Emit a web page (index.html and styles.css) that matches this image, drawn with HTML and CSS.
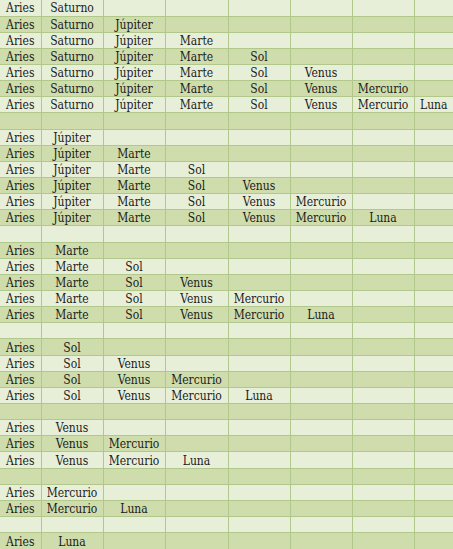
FILE: index.html
```html
<!DOCTYPE html>
<html lang="es">
<head>
<meta charset="utf-8">
<title>Combinaciones</title>
<link rel="stylesheet" href="styles.css">
</head>
<body>
<table class="grid">
<colgroup>
<col class="c-narrow"><col class="c1"><col class="c2"><col class="c3"><col class="c4"><col class="c5"><col class="c6"><col class="c-last">
</colgroup>
<tbody>
<tr><td>Aries</td><td>Saturno</td><td></td><td></td><td></td><td></td><td></td><td></td></tr>
<tr><td>Aries</td><td>Saturno</td><td>Júpiter</td><td></td><td></td><td></td><td></td><td></td></tr>
<tr><td>Aries</td><td>Saturno</td><td>Júpiter</td><td>Marte</td><td></td><td></td><td></td><td></td></tr>
<tr><td>Aries</td><td>Saturno</td><td>Júpiter</td><td>Marte</td><td>Sol</td><td></td><td></td><td></td></tr>
<tr><td>Aries</td><td>Saturno</td><td>Júpiter</td><td>Marte</td><td>Sol</td><td>Venus</td><td></td><td></td></tr>
<tr><td>Aries</td><td>Saturno</td><td>Júpiter</td><td>Marte</td><td>Sol</td><td>Venus</td><td>Mercurio</td><td></td></tr>
<tr><td>Aries</td><td>Saturno</td><td>Júpiter</td><td>Marte</td><td>Sol</td><td>Venus</td><td>Mercurio</td><td>Luna</td></tr>
<tr><td></td><td></td><td></td><td></td><td></td><td></td><td></td><td></td></tr>
<tr><td>Aries</td><td>Júpiter</td><td></td><td></td><td></td><td></td><td></td><td></td></tr>
<tr><td>Aries</td><td>Júpiter</td><td>Marte</td><td></td><td></td><td></td><td></td><td></td></tr>
<tr><td>Aries</td><td>Júpiter</td><td>Marte</td><td>Sol</td><td></td><td></td><td></td><td></td></tr>
<tr><td>Aries</td><td>Júpiter</td><td>Marte</td><td>Sol</td><td>Venus</td><td></td><td></td><td></td></tr>
<tr><td>Aries</td><td>Júpiter</td><td>Marte</td><td>Sol</td><td>Venus</td><td>Mercurio</td><td></td><td></td></tr>
<tr><td>Aries</td><td>Júpiter</td><td>Marte</td><td>Sol</td><td>Venus</td><td>Mercurio</td><td>Luna</td><td></td></tr>
<tr><td></td><td></td><td></td><td></td><td></td><td></td><td></td><td></td></tr>
<tr><td>Aries</td><td>Marte</td><td></td><td></td><td></td><td></td><td></td><td></td></tr>
<tr><td>Aries</td><td>Marte</td><td>Sol</td><td></td><td></td><td></td><td></td><td></td></tr>
<tr><td>Aries</td><td>Marte</td><td>Sol</td><td>Venus</td><td></td><td></td><td></td><td></td></tr>
<tr><td>Aries</td><td>Marte</td><td>Sol</td><td>Venus</td><td>Mercurio</td><td></td><td></td><td></td></tr>
<tr><td>Aries</td><td>Marte</td><td>Sol</td><td>Venus</td><td>Mercurio</td><td>Luna</td><td></td><td></td></tr>
<tr><td></td><td></td><td></td><td></td><td></td><td></td><td></td><td></td></tr>
<tr><td>Aries</td><td>Sol</td><td></td><td></td><td></td><td></td><td></td><td></td></tr>
<tr><td>Aries</td><td>Sol</td><td>Venus</td><td></td><td></td><td></td><td></td><td></td></tr>
<tr><td>Aries</td><td>Sol</td><td>Venus</td><td>Mercurio</td><td></td><td></td><td></td><td></td></tr>
<tr><td>Aries</td><td>Sol</td><td>Venus</td><td>Mercurio</td><td>Luna</td><td></td><td></td><td></td></tr>
<tr><td></td><td></td><td></td><td></td><td></td><td></td><td></td><td></td></tr>
<tr><td>Aries</td><td>Venus</td><td></td><td></td><td></td><td></td><td></td><td></td></tr>
<tr><td>Aries</td><td>Venus</td><td>Mercurio</td><td></td><td></td><td></td><td></td><td></td></tr>
<tr><td>Aries</td><td>Venus</td><td>Mercurio</td><td>Luna</td><td></td><td></td><td></td><td></td></tr>
<tr><td></td><td></td><td></td><td></td><td></td><td></td><td></td><td></td></tr>
<tr><td>Aries</td><td>Mercurio</td><td></td><td></td><td></td><td></td><td></td><td></td></tr>
<tr><td>Aries</td><td>Mercurio</td><td>Luna</td><td></td><td></td><td></td><td></td><td></td></tr>
<tr><td></td><td></td><td></td><td></td><td></td><td></td><td></td><td></td></tr>
<tr><td>Aries</td><td>Luna</td><td></td><td></td><td></td><td></td><td></td><td></td></tr>
</tbody>
</table>
</body>
</html>
```
FILE: styles.css
```css
html, body {
  margin: 0;
  padding: 0;
  background: #e8efd9;
}
.grid {
  width: 453px;
  height: 549px;
  border-collapse: collapse;
  table-layout: fixed;
}
.c-narrow { width: 41px; }
.c1 { width: 62px; }
.c2 { width: 62px; }
.c3 { width: 63px; }
.c4 { width: 62px; }
.c5 { width: 62px; }
.c6 { width: 62px; }
.c-last { width: 39px; }
.grid tr { height: 16.15px; }
.grid td {
  padding: 2px 0 0;
  height: 13px;
  line-height: 13px;
  text-align: center;
  white-space: nowrap;
  overflow: hidden;
  border: 1px solid #b2c78b;
  font-family: "DejaVu Serif Condensed", "DejaVu Serif", serif;
  font-stretch: condensed;
  font-size: 12px;
  color: #1b1b1b;
}
.grid tr:nth-child(odd) td { background: #e8efd9; }
.grid tr:nth-child(even) td { background: #cfddad; }
.grid tr:first-child td { border-top: none; }
.grid tr:last-child td { border-bottom: none; }
.grid td:first-child { border-left: none; }
.grid td:last-child { border-right: none; }
```
